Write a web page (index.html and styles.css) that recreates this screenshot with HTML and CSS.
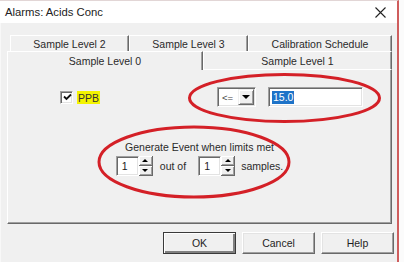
FILE: index.html
```html
<!DOCTYPE html>
<html>
<head>
<meta charset="utf-8">
<link rel="stylesheet" href="styles.css">
</head>
<body>
<div class="screen">
  <div class="window">
    <div class="titlebar">
      <span class="title">Alarms: Acids Conc</span>
      <svg class="close" width="11" height="11" viewBox="0 0 11 11"><path d="M0.5 0.5 L10.5 10.5 M10.5 0.5 L0.5 10.5" stroke="#222" stroke-width="1.1" fill="none"/></svg>
    </div>
    <div class="client">
      <div class="tabctl">
        <div class="tabrow back">
          <div class="tab w1">Sample Level 2</div>
          <div class="tab w2">Sample Level 3</div>
          <div class="tab w3">Calibration Schedule</div>
        </div>
        <div class="tabrow front">
          <div class="tab sel">Sample Level 0</div>
          <div class="tab other">Sample Level 1</div>
        </div>
        <div class="panel">
          <div class="row-limit">
            <div class="check">
              <svg width="9" height="9" viewBox="0 0 9 9"><path d="M1 3.5 L3.5 6 L8 1.5" stroke="#111" stroke-width="1.8" fill="none"/></svg>
            </div>
            <span class="ppb">PPB</span>
            <div class="combo">
              <span class="combo-text">&lt;=</span>
              <div class="drop"><span class="tri-down"></span></div>
            </div>
            <div class="edit value"><span class="selected">15.0</span></div>
          </div>
          <div class="event-text">Generate Event when limits met</div>
          <div class="row-spin">
            <div class="spin">
              <div class="edit spin-edit">1</div>
              <div class="spin-btns">
                <div class="sbtn"><span class="tri-up"></span></div>
                <div class="sbtn"><span class="tri-down small"></span></div>
              </div>
            </div>
            <span class="lbl-out">out of</span>
            <div class="spin">
              <div class="edit spin-edit">1</div>
              <div class="spin-btns">
                <div class="sbtn"><span class="tri-up"></span></div>
                <div class="sbtn"><span class="tri-down small"></span></div>
              </div>
            </div>
            <span class="lbl-samples">samples.</span>
          </div>
        </div>
      </div>
      <div class="buttons">
        <div class="btn default">OK</div>
        <div class="btn">Cancel</div>
        <div class="btn">Help</div>
      </div>
    </div>
  </div>
  <div class="edge"></div>
  <svg class="annot" width="404" height="262" viewBox="0 0 404 262">
    <ellipse cx="284.5" cy="98" rx="95" ry="23.5" fill="none" stroke="#d42027" stroke-width="3"/>
    <ellipse cx="194" cy="162" rx="95" ry="35" fill="none" stroke="#d42027" stroke-width="3"/>
  </svg>
</div>
</body>
</html>
```
FILE: styles.css
```css
* { box-sizing: border-box; }
html, body { margin: 0; padding: 0; }
body {
  width: 404px;
  height: 262px;
  overflow: hidden;
  background: #f0f0f0;
  font-family: "Liberation Sans", Arial, sans-serif;
  color: #1e1e1e;
}
.screen {
  position: relative;
  width: 404px;
  height: 262px;
  display: flex;
}
.window {
  width: 399px;
  height: 262px;
  display: flex;
  flex-direction: column;
  border-top: 1px solid #e2d6d6;
  border-right: 2px solid #cf5d5d;
}
.edge {
  flex: 1;
  background: #fbfbfb;
}
.titlebar {
  height: 22px;
  background: #ffffff;
  display: flex;
  align-items: center;
  justify-content: space-between;
  padding: 0 11px 0 5px;
}
.title {
  font-size: 11.3px;
  color: #222;
}
.close { display: block; margin-top: 1px; }
.client {
  flex: 1;
  background: #f0f0f0;
  padding: 12px 0 0 7px;
  border-left: 1px solid #f8f8f8;
  display: flex;
  flex-direction: column;
}
.tabctl { width: 385px; margin-left: -1px; }
.tabrow { display: flex; }
.tabrow.back { height: 16px; margin-left: 3px; }
.tabrow.front { height: 19px; }
.tab {
  font-size: 10.5px;
  color: #2a2a2a;
  display: flex;
  align-items: center;
  justify-content: center;
  border-top: 1px solid #ffffff;
  border-left: 1px solid #ffffff;
  border-right: 1px solid #696969;
  box-shadow: inset -1px 0 0 #a0a0a0;
}
.w1 { width: 119px; }
.w2 { width: 119px; }
.w3 { width: 144px; }
.tab.sel { width: 196px; padding-bottom: 1px; }
.tab.other { width: 189px; border-bottom: 1px solid #ffffff; padding-top: 1px; }
.panel {
  height: 154px;
  border-left: 1px solid #ffffff;
  border-right: 1px solid #696969;
  border-bottom: 1px solid #696969;
  box-shadow: inset -1px -1px 0 #a0a0a0;
  display: flex;
  flex-direction: column;
  padding-top: 17px;
}
.row-limit {
  display: flex;
  align-items: center;
  height: 20px;
  padding-left: 52px;
}
.check {
  width: 13px;
  height: 13px;
  background: #ffffff;
  border-top: 1px solid #a0a0a0;
  border-left: 1px solid #a0a0a0;
  border-bottom: 1px solid #ffffff;
  border-right: 1px solid #ffffff;
  box-shadow: inset 1px 1px 0 #696969, inset -1px -1px 0 #e3e3e3;
  display: flex;
  align-items: center;
  justify-content: center;
}
.check svg { display: block; margin: 0 0 0 1px; }
.ppb {
  margin-left: 4px;
  font-size: 10.5px;
  background: #f4f400;
  padding: 1px 1px 0 1px;
  line-height: 12px;
  color: #333;
}
.edit {
  background: #ffffff;
  border-top: 1px solid #a0a0a0;
  border-left: 1px solid #a0a0a0;
  border-bottom: 1px solid #ffffff;
  border-right: 1px solid #ffffff;
  box-shadow: inset 1px 1px 0 #696969, inset -1px -1px 0 #e3e3e3;
  font-size: 10.5px;
}
.combo {
  margin-left: 117px;
  width: 39px;
  height: 20px;
  display: flex;
  align-items: stretch;
  background: #ffffff;
  border-top: 1px solid #a0a0a0;
  border-left: 1px solid #a0a0a0;
  border-bottom: 1px solid #ffffff;
  border-right: 1px solid #ffffff;
  box-shadow: inset 1px 1px 0 #696969, inset -1px -1px 0 #e3e3e3;
  padding: 1px;
}
.combo-text {
  flex: 1;
  font-size: 9.5px;
  color: #444;
  display: flex;
  align-items: center;
  padding-left: 3px;
}
.drop {
  width: 16px;
  background: #f0f0f0;
  border-top: 1px solid #f0f0f0;
  border-left: 1px solid #f0f0f0;
  border-right: 1px solid #696969;
  border-bottom: 1px solid #696969;
  box-shadow: inset 1px 1px 0 #ffffff, inset -1px -1px 0 #a0a0a0;
  display: flex;
  align-items: center;
  justify-content: center;
}
.tri-down {
  width: 0; height: 0;
  border-left: 4px solid transparent;
  border-right: 4px solid transparent;
  border-top: 4px solid #000;
}
.tri-down.small, .tri-up {
  border-left-width: 3px;
  border-right-width: 3px;
}
.tri-down.small { border-top-width: 3px; }
.tri-up {
  width: 0; height: 0;
  border-left: 3px solid transparent;
  border-right: 3px solid transparent;
  border-bottom: 3px solid #000;
}
.value {
  margin-left: 12px;
  width: 95px;
  height: 20px;
  display: flex;
  align-items: center;
  padding-left: 3px;
}
.selected {
  background: #1e73c8;
  color: #ffffff;
  font-size: 10.5px;
  line-height: 13px;
  padding: 0 1px;
}
.event-text {
  font-size: 10.5px;
  line-height: 13px;
  text-align: center;
  margin-top: 34px;
  color: #2a2a2a;
}
.row-spin {
  margin-top: 2px;
  display: flex;
  align-items: center;
  justify-content: center;
  height: 20px;
  font-size: 10.5px;
  color: #2a2a2a;
}
.spin { display: flex; height: 20px; }
.spin-edit {
  width: 23px;
  height: 20px;
  display: flex;
  align-items: center;
  padding-left: 5px;
  color: #222;
}
.spin-btns {
  width: 14px;
  display: flex;
  flex-direction: column;
}
.sbtn {
  flex: 1;
  background: #f0f0f0;
  border-right: 1px solid #696969;
  border-bottom: 1px solid #696969;
  box-shadow: inset 1px 1px 0 #ffffff, inset -1px -1px 0 #a0a0a0;
  display: flex;
  align-items: center;
  justify-content: center;
}
.lbl-out { margin: 0 12px 0 7px; }
.lbl-samples { margin-left: 6px; }
.buttons {
  display: flex;
  justify-content: flex-end;
  gap: 6px;
  margin-top: 8px;
  width: 386px;
}
.btn {
  width: 73px;
  height: 22px;
  font-size: 10.5px;
  color: #1e1e1e;
  display: flex;
  align-items: center;
  justify-content: center;
  background: #f0f0f0;
  border-top: 1px solid #ffffff;
  border-left: 1px solid #ffffff;
  border-right: 1px solid #696969;
  border-bottom: 1px solid #696969;
  box-shadow: inset -1px -1px 0 #a0a0a0, inset 1px 1px 0 #e3e3e3;
}
.btn.default {
  border: 1px solid #3a3a3a;
  box-shadow: inset 1px 1px 0 #ffffff, inset -2px -2px 0 #808080;
}
.annot {
  position: absolute;
  left: 0;
  top: 0;
  pointer-events: none;
}
```
